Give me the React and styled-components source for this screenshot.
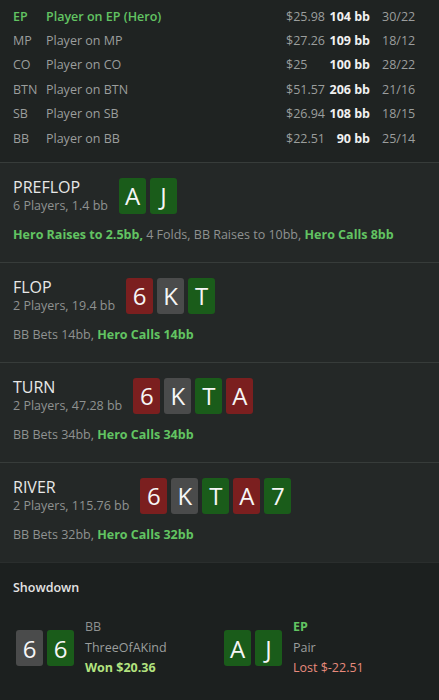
import React from 'react';
import styled, { createGlobalStyle } from 'styled-components';

const GlobalStyle = createGlobalStyle`
  html, body {
    margin: 0;
    padding: 0;
    background: #1c201f;
  }
  body {
    font-family: "Open Sans", "Noto Sans", "Liberation Sans", sans-serif;
    color: #9b9e9d;
  }
`;

const Page = styled.div`
  width: 439px;
  height: 700px;
  overflow: hidden;
  background: #1f2322;
`;

const Players = styled.div`
  padding: 4px 0 12px;
`;

const PlayerRow = styled.div`
  display: grid;
  grid-template-columns: 33px 240px 36px 48px 1fr;
  align-items: center;
  height: 24.4px;
  padding-left: 13px;
  font-size: 12.5px;
  white-space: nowrap;
  color: ${(p) => (p.$hero ? '#62c462' : '#9b9e9d')};
  font-weight: ${(p) => (p.$hero ? 600 : 400)};
`;

const Stack = styled.span`
  color: #9b9e9d;
  font-weight: 400;
`;

const BigBlinds = styled.span`
  color: #f1f1f1;
  font-weight: 700;
  text-align: right;
`;

const Ratio = styled.span`
  padding-left: 12px;
  color: #9b9e9d;
  font-weight: 400;
`;

const Street = styled.section`
  border-top: 1.5px solid #373c3a;
  background: #242827;
  height: 100px;
  padding: 14px 13px 0;
  box-sizing: border-box;
`;

const StreetHead = styled.div`
  display: flex;
  align-items: center;
  gap: 11px;
`;

const StreetInfo = styled.div`
  display: flex;
  flex-direction: column;
`;

const StreetTitle = styled.div`
  font-size: 16px;
  line-height: 20px;
  color: #e8e8e8;
`;

const StreetSub = styled.div`
  font-size: 12.5px;
  line-height: 17px;
  color: #8f9291;
`;

const Cards = styled.div`
  display: flex;
  gap: 4px;
`;

const Card = styled.div`
  width: 27px;
  height: 36px;
  border-radius: 3px;
  display: flex;
  align-items: center;
  justify-content: center;
  font-size: 24px;
  color: #f6f6f6;
  background: ${(p) =>
    p.$suit === 'r' ? '#7b1f1f' : p.$suit === 'g' ? '#1a5c1a' : '#4a4b4b'};
`;

const Actions = styled.div`
  margin-top: 12px;
  font-size: 12.5px;
  line-height: 17px;
  color: #8f9291;
`;

const Hero = styled.span`
  color: #62c462;
  font-weight: 700;
`;

const Showdown = styled.section`
  background: #1c201f;
  border-top: 1.5px solid #2a2e2d;
  padding: 16px 0 0;
  height: 140px;
`;

const ShowdownTitle = styled.div`
  padding-left: 13px;
  font-size: 12.5px;
  font-weight: 600;
  line-height: 18px;
  color: #e4e4e4;
`;

const Hands = styled.div`
  display: grid;
  grid-template-columns: 208px 1fr;
  padding: 20px 0 0 16px;
`;

const Hand = styled.div`
  display: flex;
  align-items: center;
  gap: 11px;
`;

const HandText = styled.div`
  display: flex;
  flex-direction: column;
  font-size: 12.5px;
  line-height: 20.5px;
`;

const Seat = styled.span`
  color: ${(p) => (p.$hero ? '#62c462' : '#8f9291')};
  font-weight: ${(p) => (p.$hero ? 700 : 400)};
`;

const Result = styled.span`
  color: ${(p) => (p.$won ? '#b3e37f' : '#e88a7c')};
  font-weight: ${(p) => (p.$won ? 700 : 400)};
`;

const players = [
  ['EP', 'Player on EP (Hero)', '$25.98', '104 bb', '30/22', true],
  ['MP', 'Player on MP', '$27.26', '109 bb', '18/12'],
  ['CO', 'Player on CO', '$25', '100 bb', '28/22'],
  ['BTN', 'Player on BTN', '$51.57', '206 bb', '21/16'],
  ['SB', 'Player on SB', '$26.94', '108 bb', '18/15'],
  ['BB', 'Player on BB', '$22.51', '90 bb', '25/14'],
];

const board = [
  ['6', 'r'],
  ['K', 'k'],
  ['T', 'g'],
  ['A', 'r'],
  ['7', 'g'],
];

const streets = [
  {
    title: 'PREFLOP',
    sub: '6 Players, 1.4 bb',
    cards: [['A', 'g'], ['J', 'g']],
    actions: [
      [true, 'Hero Raises to 2.5bb,'],
      [false, ' 4 Folds, BB Raises to 10bb, '],
      [true, 'Hero Calls 8bb'],
    ],
  },
  {
    title: 'FLOP',
    sub: '2 Players, 19.4 bb',
    cards: board.slice(0, 3),
    actions: [[false, 'BB Bets 14bb, '], [true, 'Hero Calls 14bb']],
  },
  {
    title: 'TURN',
    sub: '2 Players, 47.28 bb',
    cards: board.slice(0, 4),
    actions: [[false, 'BB Bets 34bb, '], [true, 'Hero Calls 34bb']],
  },
  {
    title: 'RIVER',
    sub: '2 Players, 115.76 bb',
    cards: board,
    actions: [[false, 'BB Bets 32bb, '], [true, 'Hero Calls 32bb']],
  },
];

function CardList({ cards }) {
  return (
    <Cards>
      {cards.map(([rank, suit], i) => (
        <Card key={i} $suit={suit}>{rank}</Card>
      ))}
    </Cards>
  );
}

export default function App() {
  return (
    <Page>
      <GlobalStyle />
      <Players>
        {players.map(([pos, name, money, bb, ratio, hero]) => (
          <PlayerRow key={pos} $hero={hero}>
            <span>{pos}</span>
            <span>{name}</span>
            <Stack>{money}</Stack>
            <BigBlinds>{bb}</BigBlinds>
            <Ratio>{ratio}</Ratio>
          </PlayerRow>
        ))}
      </Players>

      {streets.map((s) => (
        <Street key={s.title}>
          <StreetHead>
            <StreetInfo>
              <StreetTitle>{s.title}</StreetTitle>
              <StreetSub>{s.sub}</StreetSub>
            </StreetInfo>
            <CardList cards={s.cards} />
          </StreetHead>
          <Actions>
            {s.actions.map(([hero, text], i) =>
              hero ? <Hero key={i}>{text}</Hero> : <span key={i}>{text}</span>
            )}
          </Actions>
        </Street>
      ))}

      <Showdown>
        <ShowdownTitle>Showdown</ShowdownTitle>
        <Hands>
          <Hand>
            <CardList cards={[['6', 'k'], ['6', 'g']]} />
            <HandText>
              <Seat>BB</Seat>
              <span>ThreeOfAKind</span>
              <Result $won>Won $20.36</Result>
            </HandText>
          </Hand>
          <Hand>
            <CardList cards={[['A', 'g'], ['J', 'g']]} />
            <HandText>
              <Seat $hero>EP</Seat>
              <span>Pair</span>
              <Result>Lost $-22.51</Result>
            </HandText>
          </Hand>
        </Hands>
      </Showdown>
    </Page>
  );
}
